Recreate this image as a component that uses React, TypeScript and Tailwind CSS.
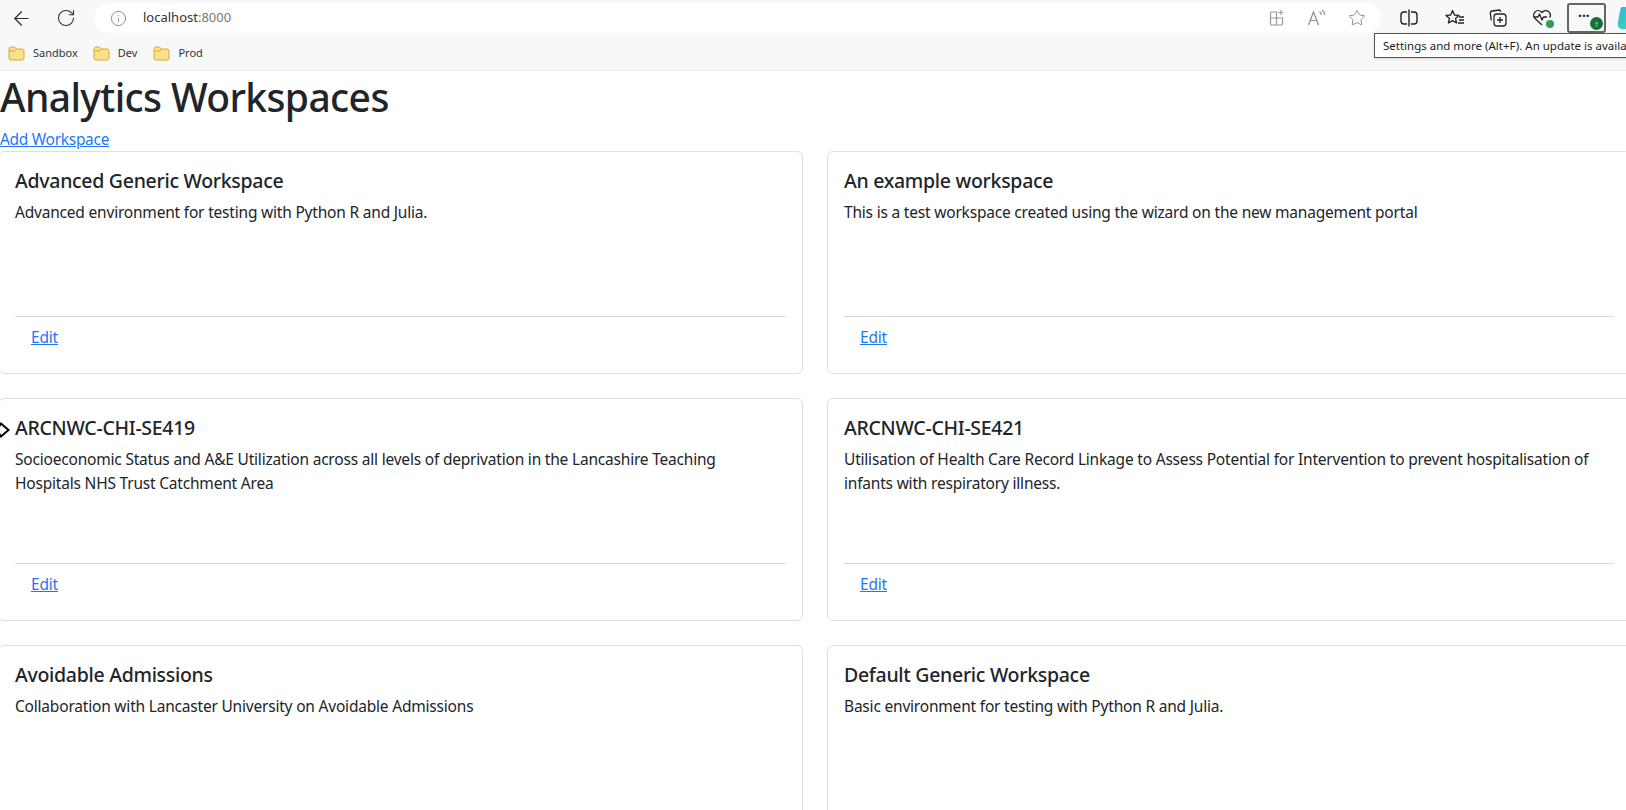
import React from 'react';
import { ArrowLeft, RotateCw, Info, Star } from 'lucide-react';

const workspaces = [
  { title: 'Advanced Generic Workspace', text: 'Advanced environment for testing with Python R and Julia.' },
  { title: 'An example workspace', text: 'This is a test workspace created using the wizard on the new management portal' },
  { title: 'ARCNWC-CHI-SE419', text: 'Socioeconomic Status and A&E Utilization across all levels of deprivation in the Lancashire Teaching Hospitals NHS Trust Catchment Area' },
  { title: 'ARCNWC-CHI-SE421', text: 'Utilisation of Health Care Record Linkage to Assess Potential for Intervention to prevent hospitalisation of infants with respiratory illness.' },
  { title: 'Avoidable Admissions', text: 'Collaboration with Lancaster University on Avoidable Admissions' },
  { title: 'Default Generic Workspace', text: 'Basic environment for testing with Python R and Julia.' },
];

const Folder = () => (
  <svg width="17" height="15" viewBox="0 0 17 15" className="shrink-0">
    <path d="M1 3a2 2 0 0 1 2-2h3.500l2 2H14a2 2 0 0 1 2 2v7a2 2 0 0 1-2 2H3a2 2 0 0 1-2-2z" fill="#fde08a" stroke="#d9a93a" strokeWidth="1" />
    <path d="M1 5h6l1.500-2" fill="none" stroke="#d9a93a" strokeWidth="1" />
  </svg>
);

const Bookmark = ({ label, className }: { label: string; className: string }) => (
  <div className={`flex items-center gap-2 ${className}`}>
    <Folder />
    <span className="text-[11px] text-[#333]">{label}</span>
  </div>
);

const AppsIcon = () => (
  <svg width="18" height="18" viewBox="0 0 18 18" fill="none" stroke="#9a9a9a" strokeWidth="1.2">
    <path d="M9 3H3.500a1 1 0 0 0-1 1v11a1 1 0 0 0 1 1h10a1 1 0 0 0 1-1V9H2.500M8.500 3v13M13 1v5M10.500 3.500h5" />
  </svg>
);

const ReadIcon = () => (
  <svg width="20" height="18" viewBox="0 0 20 18" fill="none" stroke="#8e8e8e" strokeWidth="1.2">
    <path d="M1.500 16 6.500 3l5 13M3.200 11.500h6.600M12.500 2.500c1.200.8 1.800 2 1.800 3.500M15 1c1.800 1.200 2.700 3 2.700 5" />
  </svg>
);

const SplitIcon = () => (
  <svg width="20" height="20" viewBox="0 0 20 20" fill="none" stroke="#222" strokeWidth="1.4" className="shrink-0">
    <path d="M8 4H5a3 3 0 0 0-3 3v6a3 3 0 0 0 3 3h3M12 4h3a3 3 0 0 1 3 3v6a3 3 0 0 1-3 3h-3M10 1.500v17" />
  </svg>
);

const FavListIcon = () => (
  <svg width="20" height="18" viewBox="0 0 20 18" fill="none" stroke="#222" strokeWidth="1.3" strokeLinejoin="round">
    <path d="M7.500 1.500 9.400 6l4.600.4-3.500 3 1.100 4.600-4.100-2.400L3.400 14l1.100-4.600-3.500-3L5.600 6z" />
    <path d="M14 8h5M14 11h5M13 14h6" />
  </svg>
);

const CollectionsIcon = () => (
  <svg width="20" height="20" viewBox="0 0 20 20" fill="none" stroke="#222" strokeWidth="1.3">
    <rect x="6" y="6" width="12" height="12" rx="3" />
    <path d="M12 9v6M9 12h6M13 3.500 11.500 2 4 3a2 2 0 0 0-1.700 2.300L3.300 12.500" />
  </svg>
);

const HealthIcon = () => (
  <div className="relative w-5 h-5">
    <svg width="20" height="20" viewBox="0 0 20 20" fill="none" stroke="#222" strokeWidth="1.3" strokeLinejoin="round">
      <path d="M10 17 3 10.500a4.600 4.600 0 0 1 0-6.500 4.600 4.600 0 0 1 6.500 0l.5.6.6-.6a4.600 4.600 0 0 1 6.400 0 4.500 4.500 0 0 1 .6 5.600" />
      <path d="M1.500 9H6l1.500-3 2.500 6 1.500-3H15" />
    </svg>
    <span className="absolute right-[-2px] bottom-0 w-2 h-2 rounded-full bg-[#2e9e4f]" />
  </div>
);

const Card = ({ title, text, first }: { title: string; text: string; first: boolean }) => (
  <div className={`flex flex-col h-[223px] shrink-0 rounded-md border border-[#dfdfdf] bg-white px-4 pt-[17px] ${first ? 'w-[805px]' : 'w-[804px]'}`}>
    <h5 className="text-[19.5px] leading-6 font-medium tracking-[-0.29px] text-[#212529]">{title}</h5>
    <p className="mt-[7px] h-[116px] pr-4 text-[15.5px] leading-6 tracking-[-0.2px] text-[#212529]">{text}</p>
    <div className="border-t border-[#d9d9d9] pl-4 pt-2">
      <a href="#" className="text-[15.5px] leading-6 tracking-[-0.18px] text-[#1f76f8] underline">Edit</a>
    </div>
  </div>
);

export default function App() {
  return (
    <div className="relative h-[810px] w-[1626px] overflow-hidden bg-white font-['Noto_Sans',sans-serif]">
      <div className="h-[71px] bg-[#f6f9f7] border-b border-[#eef0ee]">
        <div className="flex items-center h-9 pl-[10px]">
          <ArrowLeft size={23} strokeWidth={1.3} className="shrink-0 text-[#333]" />
          <RotateCw size={20} strokeWidth={1.3} className="shrink-0 ml-[23px] text-[#333]" />
          <div className="flex items-center shrink-0 ml-[18px] w-[1287px] h-[30px] rounded-full bg-white pl-4 pr-[15px]">
            <Info size={17} strokeWidth={1.2} className="text-[#777]" />
            <span className="ml-[16px] text-[13px] text-[#333]">localhost<span className="text-[#777]">:8000</span></span>
            <div className="ml-auto flex items-center gap-[21px]">
              <AppsIcon />
              <ReadIcon />
              <Star size={18} strokeWidth={1.1} className="text-[#777]" />
            </div>
          </div>
          <div className="ml-[18px]"><SplitIcon /></div>
          <div className="ml-[26px]"><FavListIcon /></div>
          <div className="ml-[23px]"><CollectionsIcon /></div>
          <div className="ml-[24px]"><HealthIcon /></div>
          <div className="relative ml-[15px] w-[39px] h-[30px] rounded-[3px] border-2 border-[#666] bg-[#f6f9f7] shrink-0">
            <span className="absolute left-[9px] top-[5px] text-[14px] leading-[12px] font-bold text-[#222]">···</span>
            <span className="absolute right-[1px] bottom-[1px] flex items-center justify-center w-[13px] h-[13px] rounded-full bg-[#13723c] text-[9px] leading-none font-bold text-white">↑</span>
          </div>
          <svg width="14" height="24" viewBox="0 0 14 24" className="ml-[10px] shrink-0">
            <defs>
              <linearGradient id="copilot" x1="0" y1="0" x2="1" y2="1">
                <stop offset="0" stopColor="#2fb4e8" />
                <stop offset="1" stopColor="#3fd6a8" />
              </linearGradient>
            </defs>
            <path d="M6 1h8v22H7C3 23 1 20 2 16l2-11C4.400 3 5 1 6 1z" fill="url(#copilot)" />
          </svg>
        </div>
        <div className="flex items-center h-[34px] pl-[8px]">
          <Bookmark label="Sandbox" className="" />
          <Bookmark label="Dev" className="ml-[15px]" />
          <Bookmark label="Prod" className="ml-[16px]" />
        </div>
      </div>

      <h1 className="mt-[2px] text-[39px] leading-[48px] font-medium tracking-[-0.62px] text-[#212529]">Analytics Workspaces</h1>
      <a href="#" className="block mt-[6px] text-[15.5px] leading-6 tracking-[-0.3px] text-[#1f76f8] underline">Add Workspace</a>

      <div className="grid grid-cols-[805px_804px] gap-x-[24px] gap-y-[24px] -ml-[2px]">
        {workspaces.map((w, i) => (
          <Card key={w.title} title={w.title} text={w.text} first={i % 2 === 0} />
        ))}
      </div>

      <div className="absolute left-[1374px] top-[33px] h-[25px] w-[280px] border border-[#555] bg-white px-2 text-[11.5px] leading-[23px] whitespace-nowrap text-[#222] shadow-sm">
        Settings and more (Alt+F). An update is available
      </div>

      <svg width="10" height="16" viewBox="0 0 10 16" className="absolute left-0 top-[422px]">
        <path d="M1 1.500 8.500 8 1 14.500 -3 8z" fill="#fff" stroke="#000" strokeWidth="2" />
      </svg>
    </div>
  );
}
